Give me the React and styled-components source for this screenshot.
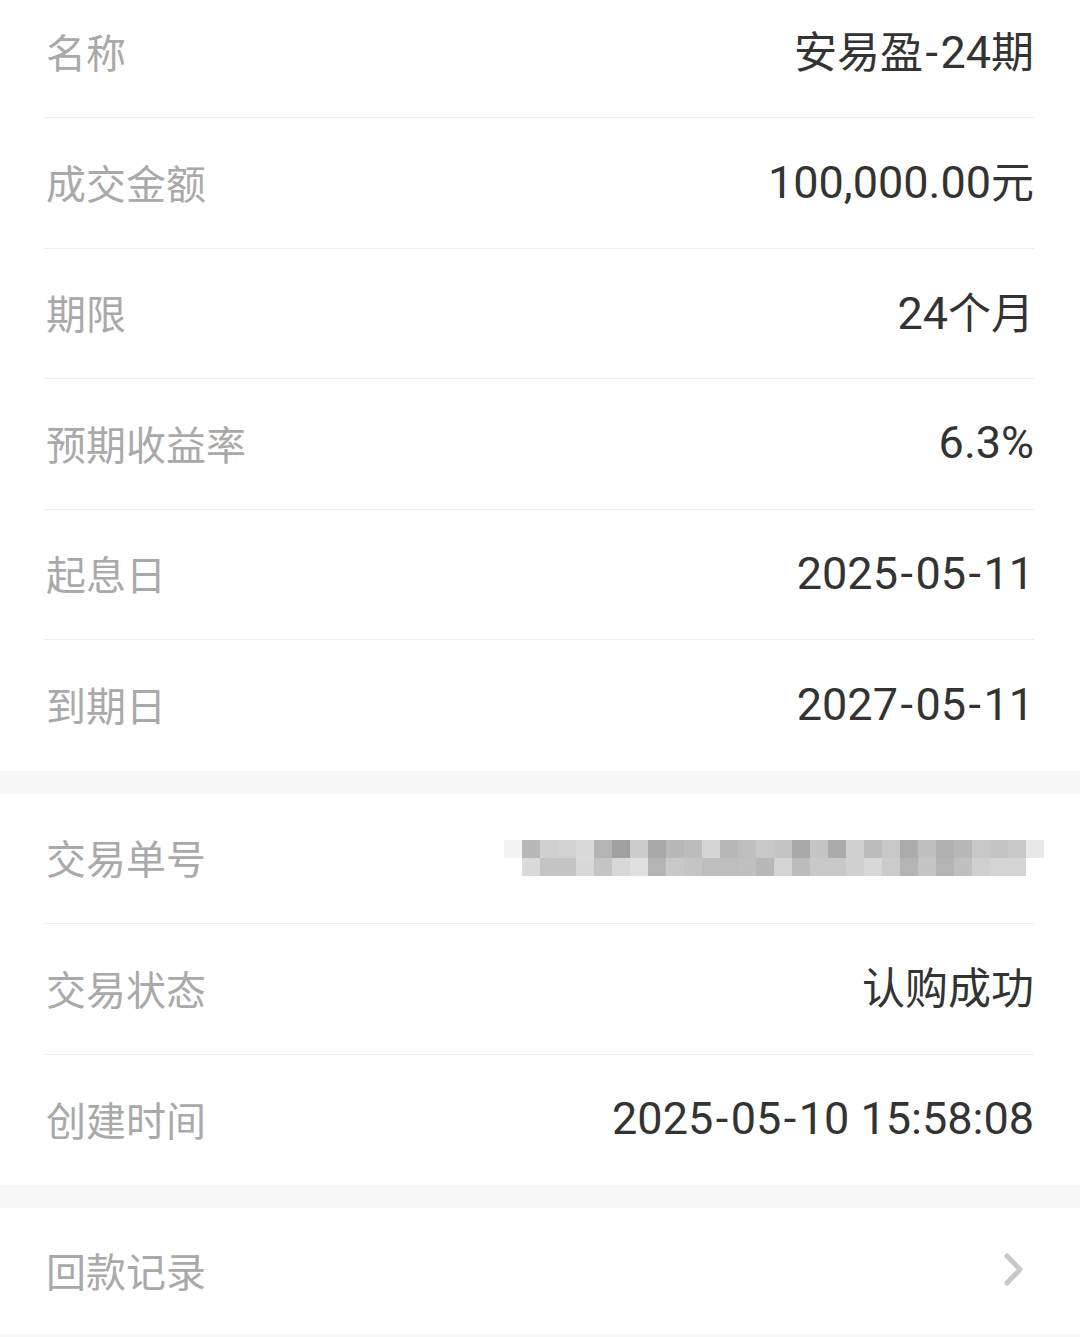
import React from "react";
import styled, { createGlobalStyle } from "styled-components";

const GlobalStyle = createGlobalStyle`
  html, body {
    margin: 0;
    padding: 0;
    background: #f7f7f7;
  }
  body {
    font-family: "Noto Sans CJK SC", "Noto Sans", sans-serif;
    -webkit-font-smoothing: antialiased;
  }
`;

const Page = styled.div`
  width: 1080px;
  height: 1337px;
  overflow: hidden;
  background: #f7f7f7;
  display: flex;
  flex-direction: column;
  gap: 23px;
`;

const Card = styled.section`
  background: #ffffff;
  padding: 0 46px 0 45px;
  display: flex;
  flex-direction: column;
  margin-top: ${(p) => p.$offset || 0}px;
`;

const Row = styled.div`
  box-sizing: border-box;
  height: ${(p) => p.$h || 130.5}px;
  display: flex;
  align-items: center;
  justify-content: space-between;
  border-bottom: 1px solid #eeeeee;
  &:last-child {
    border-bottom: none;
  }
`;

const Label = styled.span`
  font-family: "Noto Sans CJK SC", "Noto Sans", sans-serif;
  font-size: 40px;
  line-height: 1;
  color: #a9a9a9;
  padding-left: 1px;
  position: relative;
  top: -1px;
`;

const Value = styled.span`
  font-family: "Roboto", "Noto Sans CJK SC", sans-serif;
  font-size: 45px;
  line-height: 1;
  color: #333333;
  white-space: nowrap;
  position: relative;
  top: -1px;
`;

const Han = styled.span`
  font-family: "Noto Sans CJK SC", sans-serif;
  font-size: 43px;
`;

const Dash = styled.span`
  margin: 0 2.5px;
`;

const MosaicWrap = styled.div`
  margin-right: -10px;
  display: flex;
  align-items: center;
`;

const Chevron = styled.svg`
  display: block;
  margin-right: 8px;
`;

const renderValue = (text) =>
  text
    .split(/([\u4e00-\u9fff]+|-)/)
    .filter(Boolean)
    .map((part, i) => {
      if (/[\u4e00-\u9fff]/.test(part)) return <Han key={i}>{part}</Han>;
      if (part === "-") return <Dash key={i}>-</Dash>;
      return <React.Fragment key={i}>{part}</React.Fragment>;
    });

const row1 = [
  "f4", "b8", "d0", "d2", "da", "b4", "a0", "cc", "a8", "b8",
  "bc", "d4", "b8", "be", "c8", "c4", "a8", "c4", "aa", "d0",
  "bc", "c8", "ac", "c0", "b0", "b8", "c8", "c4", "c8", "e8",
];
const row2 = [
  "da", "c4", "c4", "d8", "c4", "d8", "e0", "b4", "c8", "c4",
  "be", "be", "c0", "b8", "d4", "bc", "c8", "c8", "d0", "d8",
  "cc", "b4", "c4", "b4", "c0", "d0", "d4", "d4",
];

const Mosaic = () => (
  <svg width="540" height="36" viewBox="0 0 540 36">
    {row1.map((c, i) => (
      <rect key={"a" + i} x={i * 18} y={0} width={18} height={18} fill={`#${c}${c}${c}`} />
    ))}
    {row2.map((c, i) => (
      <rect key={"b" + i} x={18 + i * 18} y={18} width={18} height={18} fill={`#${c}${c}${c}`} />
    ))}
  </svg>
);

const top = [
  ["名称", "安易盈-24期"],
  ["成交金额", "100,000.00元"],
  ["期限", "24个月"],
  ["预期收益率", "6.3%"],
  ["起息日", "2025-05-11"],
  ["到期日", "2027-05-11"],
];

export default function App() {
  return (
    <>
      <GlobalStyle />
      <Page>
        <Card $offset={-12.5}>
          {top.map(([l, v]) => (
            <Row key={l}>
              <Label>{l}</Label>
              <Value>{renderValue(v)}</Value>
            </Row>
          ))}
        </Card>
        <Card>
          <Row>
            <Label>交易单号</Label>
            <MosaicWrap>
              <Mosaic />
            </MosaicWrap>
          </Row>
          <Row>
            <Label>交易状态</Label>
            <Value>{renderValue("认购成功")}</Value>
          </Row>
          <Row>
            <Label>创建时间</Label>
            <Value>{renderValue("2025-05-10 15:58:08")}</Value>
          </Row>
        </Card>
        <Card>
          <Row $h={126}>
            <Label>回款记录</Label>
            <Chevron width="24" height="36" viewBox="0 0 24 36">
              <path d="M5 3 L18 16.5 L5 30" fill="none" stroke="#c8c8c8" strokeWidth="5" strokeLinecap="round" strokeLinejoin="round" />
            </Chevron>
          </Row>
        </Card>
      </Page>
    </>
  );
}
